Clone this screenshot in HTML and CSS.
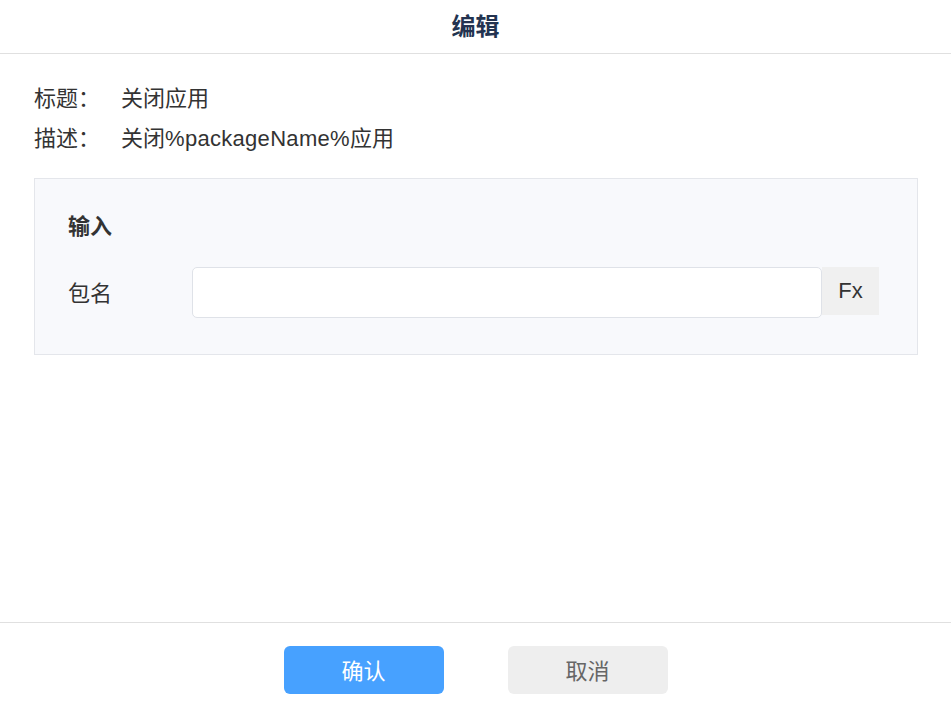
FILE: index.html
```html
<!DOCTYPE html>
<html lang="zh">
<head>
<meta charset="utf-8">
<title>编辑</title>
<link rel="stylesheet" href="styles.css">
</head>
<body>
<div class="dialog">
  <header class="header">编辑</header>
  <main class="body">
    <div class="info-row"><span class="info-label">标题：</span><span class="info-value">关闭应用</span></div>
    <div class="info-row"><span class="info-label">描述：</span><span class="info-value">关闭<span class="code">%packageName%</span>应用</span></div>
    <section class="panel">
      <div class="panel-title">输入</div>
      <div class="field">
        <span class="field-label">包名</span>
        <input class="field-input" type="text">
        <span class="fx">Fx</span>
      </div>
    </section>
  </main>
  <footer class="footer">
    <button class="btn btn-primary">确认</button>
    <button class="btn btn-default">取消</button>
  </footer>
</div>
</body>
</html>
```
FILE: styles.css
```css
* { box-sizing: border-box; }
html, body { margin: 0; padding: 0; background: #fff; }
body {
  font-family: "Liberation Sans", "Noto Sans CJK SC", sans-serif;
  color: #333;
}
.dialog {
  width: 951px;
  height: 709px;
  display: flex;
  flex-direction: column;
}
.header {
  height: 54px;
  border-bottom: 1px solid #e0e0e0;
  display: flex;
  align-items: center;
  justify-content: center;
  font-size: 24px;
  font-weight: 700;
  color: #233350;
  padding-bottom: 4px;
}
.body {
  flex: 1;
  padding: 22px 33px 0 34px;
}
.info-row {
  display: flex;
  height: 40px;
  align-items: center;
  font-size: 22px;
  color: #333;
}
.info-label { width: 87px; }
.code { letter-spacing: 0.3px; }
.panel {
  margin-top: 22px;
  background: #f8f9fc;
  border: 1px solid #e4e6eb;
  height: 177px;
  padding: 30px 38px 0 33px;
}
.panel-title {
  font-size: 22px;
  font-weight: 700;
  color: #333;
  height: 36px;
  line-height: 36px;
}
.field {
  display: flex;
  align-items: flex-start;
  margin-top: 22px;
}
.field-label {
  width: 124px;
  font-size: 22px;
  line-height: 51px;
  padding-top: 1px;
  color: #333;
}
.field-input {
  flex: 1;
  height: 51px;
  border: 1px solid #dfe2e8;
  border-radius: 5px;
  background: #fff;
  outline: none;
  font-size: 18px;
  padding: 0 12px;
}
.fx {
  width: 57px;
  height: 48px;
  background: #f0f0f0;
  font-size: 22px;
  color: #333;
  display: flex;
  align-items: center;
  justify-content: center;
}
.footer {
  height: 87px;
  border-top: 1px solid #e0e0e0;
  display: flex;
  justify-content: center;
  align-items: flex-start;
  gap: 64px;
  padding-top: 23px;
}
.btn {
  width: 160px;
  height: 48px;
  border: none;
  border-radius: 6px;
  font-family: "Liberation Sans", "Noto Sans CJK SC", sans-serif;
  font-size: 22px;
  padding: 0 0 3px;
  cursor: pointer;
}
.btn-primary { background: #47a1ff; color: #fff; }
.btn-default { background: #eeeeee; color: #666; }
```
